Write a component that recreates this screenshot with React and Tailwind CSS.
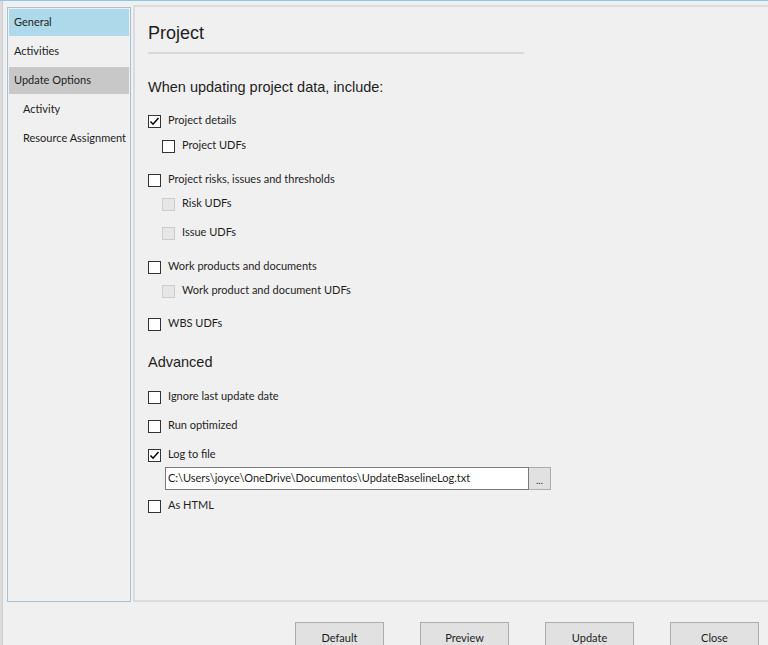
const navItems = [
  { label: "General", state: "selected" },
  { label: "Activities" },
  { label: "Update Options", state: "group" },
  { label: "Activity", indent: true },
  { label: "Resource Assignment", indent: true },
];

const CheckBox = ({ checked, disabled }) => (
  <span
    className={
      "flex h-[13px] w-[13px] shrink-0 items-center justify-center border " +
      (disabled ? "border-[#cccccc] bg-[#e6e6e6]" : "border-[#333333] bg-white")
    }
  >
    {checked && (
      <svg width="11" height="11" viewBox="0 0 11 11">
        <path d="M1.5 5.5 L4 8.2 L9.5 2" fill="none" stroke="#000" strokeWidth="1.5" />
      </svg>
    )}
  </span>
);

const Option = ({ label, checked, disabled, sub, className = "" }) => (
  <div className={"flex h-[20px] items-center gap-[7px] " + (sub ? "pl-[14px] " : "") + className}>
    <CheckBox checked={checked} disabled={disabled} />
    <span className="whitespace-nowrap pb-[1px] text-[11px] text-[#1e1e1e]">{label}</span>
  </div>
);

const DialogButton = ({ children }) => (
  <button className="h-[32px] w-[89px] border border-[#adadad] bg-[#e1e1e1] pt-[1px] text-[11px] text-[#1e1e1e]">
    {children}
  </button>
);

export default function App() {
  return (
    <div className="relative h-[645px] w-[768px] overflow-hidden border-t border-[#8ec6e6] bg-[#f0f0f0] font-['Segoe_UI','Lato',sans-serif]">
      <div className="flex">
        <div className="h-[644px] w-[3px] shrink-0 border-r border-[#cfcfcf] bg-[#dcdcdc]" />

        <nav className="ml-[4px] mt-[6px] flex h-[595px] w-[124px] shrink-0 flex-col gap-[2px] border border-[#a9bfd4] p-[1px]">
          {navItems.map((item) => (
            <div
              key={item.label}
              className={
                "flex h-[27px] items-center whitespace-nowrap text-[11px] text-[#1e1e1e] " +
                (item.indent ? "pl-[14px] " : "pl-[5px] ") +
                (item.state === "selected" ? "bg-[#aed9ea]" : item.state === "group" ? "bg-[#c8c8c8]" : "")
              }
            >
              {item.label}
            </div>
          ))}
        </nav>

        <main className="ml-[2px] mt-[4px] flex h-[597px] flex-1 flex-col border-b-2 border-l-2 border-t-2 border-[#d9dde2] pl-[13px] pt-[12px]">
          <h1 className="flex h-[28px] items-center font-['Liberation_Sans',sans-serif] text-[18px] text-[#1e1e1e]">
            Project
          </h1>
          <div className="mt-[5px] h-[2px] w-[376px] bg-[#d8d8d8]" />

          <h2 className="mt-[23px] flex h-[22px] items-center font-['Liberation_Sans',sans-serif] text-[14.5px] text-[#1e1e1e]">
            When updating project data, include:
          </h2>

          <Option className="mt-[12px]" label="Project details" checked />
          <Option className="mt-[5px]" label="Project UDFs" sub />
          <Option className="mt-[14px]" label="Project risks, issues and thresholds" />
          <Option className="mt-[4px]" label="Risk UDFs" sub disabled />
          <Option className="mt-[9px]" label="Issue UDFs" sub disabled />
          <Option className="mt-[14px]" label="Work products and documents" />
          <Option className="mt-[4px]" label="Work product and document UDFs" sub disabled />
          <Option className="mt-[13px]" label="WBS UDFs" />

          <h2 className="mt-[18px] flex h-[22px] items-center font-['Liberation_Sans',sans-serif] text-[14.5px] text-[#1e1e1e]">
            Advanced
          </h2>

          <Option className="mt-[13px]" label="Ignore last update date" />
          <Option className="mt-[9px]" label="Run optimized" />
          <Option className="mt-[9px]" label="Log to file" checked />

          <div className="ml-[17px] mt-[2px] flex h-[23px]">
            <div className="flex w-[364px] items-center whitespace-nowrap border border-[#7a7a7a] bg-white px-[2px] text-[11px] text-[#1e1e1e]">
              C:\Users\joyce\OneDrive\Documentos\UpdateBaselineLog.txt
            </div>
            <div className="flex w-[22px] items-end justify-center border border-l-0 border-[#adadad] bg-[#e1e1e1] pb-[4px] text-[10px] leading-none text-[#1e1e1e]">
              ...
            </div>
          </div>

          <Option className="mt-[6px]" label="As HTML" />
        </main>
      </div>

      <div className="absolute left-[295px] top-[621px] flex gap-[36px]">
        <DialogButton>Default</DialogButton>
        <DialogButton>Preview</DialogButton>
        <DialogButton>Update</DialogButton>
        <DialogButton>Close</DialogButton>
      </div>
    </div>
  );
}
